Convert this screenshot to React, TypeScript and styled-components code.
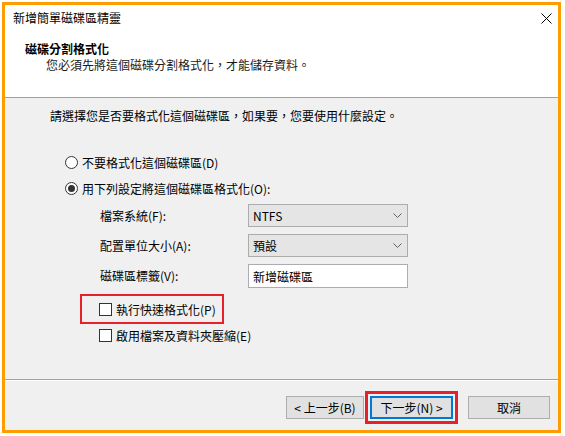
import React from 'react';
import styled, { createGlobalStyle } from 'styled-components';

const GlobalStyle = createGlobalStyle`
  html, body {
    margin: 0;
    padding: 0;
    background: #ffffff;
  }
  body {
    font-family: "Noto Sans CJK TC", "Noto Sans", sans-serif;
    font-size: 12px;
    color: #000;
  }
`;

const Frame = styled.div`
  box-sizing: border-box;
  margin: 2px;
  width: 559px;
  height: 431px;
  border: 3px solid #ff9c00;
  display: flex;
  flex-direction: column;
  background: #f0f0f0;
`;

const Header = styled.div`
  background: #ffffff;
  height: 93px;
  box-sizing: border-box;
  border-bottom: 1px solid #a0a0a0;
  display: flex;
  flex-direction: column;
`;

const TitleBar = styled.div`
  height: 26px;
  display: flex;
  align-items: center;
  justify-content: space-between;
  padding: 0 5px 0 8px;
`;

const TitleText = styled.span`
  line-height: 16px;
`;

const CloseButton = styled.div`
  width: 12px;
  height: 12px;
  display: flex;
  align-items: center;
  justify-content: center;
  margin-right: 1px;
`;

const HeadingBlock = styled.div`
  padding: 10px 0 0 20px;
`;

const Heading = styled.div`
  font-weight: bold;
  line-height: 16px;
`;

const SubHeading = styled.div`
  line-height: 16px;
  padding-left: 21px;
  color: #1a1a1a;
`;

const Body = styled.div`
  flex: 1;
  padding: 9px 0 0 45px;
  display: flex;
  flex-direction: column;
  align-items: flex-start;
`;

const Prompt = styled.div`
  line-height: 17px;
`;

const OptionRow = styled.div<{ $top: number; $left: number; $height?: number }>`
  display: flex;
  align-items: center;
  height: ${(p) => p.$height ?? 20}px;
  margin-top: ${(p) => p.$top}px;
  margin-left: ${(p) => p.$left}px;
`;

const Radio = styled.span<{ $checked?: boolean }>`
  box-sizing: border-box;
  width: 13px;
  height: 13px;
  border-radius: 50%;
  border: 1px solid #333;
  background: #fff;
  margin-right: 4px;
  display: flex;
  align-items: center;
  justify-content: center;
  &::after {
    content: '';
    display: ${(p) => (p.$checked ? 'block' : 'none')};
    width: 7px;
    height: 7px;
    border-radius: 50%;
    background: #333;
  }
`;

const Checkbox = styled.span`
  box-sizing: border-box;
  width: 13px;
  height: 13px;
  border: 1px solid #333;
  background: #fff;
  margin-right: 4px;
`;

const SettingsGrid = styled.div`
  display: grid;
  grid-template-columns: 148px 160px;
  grid-template-rows: 23px 23px 24px;
  row-gap: 7px;
  margin: 6px 0 0 50px;
  align-items: center;
`;

const FieldLabel = styled.div`
  line-height: 16px;
`;

const Select = styled.div`
  box-sizing: border-box;
  height: 23px;
  border: 1px solid #acacac;
  background: #e5e5e5;
  display: flex;
  align-items: center;
  justify-content: space-between;
  padding: 0 5px 0 4px;
`;

const TextInput = styled.div`
  box-sizing: border-box;
  height: 24px;
  border: 1px solid #abadb3;
  background: #fff;
  display: flex;
  align-items: center;
  padding: 0 4px;
`;

const Highlight = styled.div<{ $thin?: boolean }>`
  box-sizing: border-box;
  border: ${(p) => (p.$thin ? 2 : 3)}px solid #e8202c;
  padding: 2px;
`;

const QuickFormatBox = styled(Highlight)`
  width: 144px;
  margin: 6px 0 0 30px;
  padding: 0 0 0 17px;
`;

const Footer = styled.div`
  border-top: 1px solid #a0a0a0;
  box-shadow: inset 0 1px 0 #ffffff;
  height: 51px;
  box-sizing: border-box;
  display: flex;
  justify-content: flex-end;
  align-items: flex-start;
  padding: 11px 8px 0 0;
`;

const Button = styled.button<{ $primary?: boolean; $width: number }>`
  box-sizing: border-box;
  width: ${(p) => p.$width}px;
  height: 23px;
  margin: 0;
  padding: 0;
  font-family: inherit;
  font-size: 12px;
  color: #000;
  background: #e1e1e1;
  border: ${(p) => (p.$primary ? '2px solid #0078d7' : '1px solid #adadad')};
  display: block;
`;

const BackButton = styled(Button)`
  margin-top: 5px;
  margin-right: 1px;
`;

const CancelButton = styled(Button)`
  margin-top: 5px;
  margin-left: 10px;
`;

function Chevron() {
  return (
    <svg width="9" height="5" viewBox="0 0 9 5">
      <path d="M0.5 0.5 L4.5 4.5 L8.5 0.5" fill="none" stroke="#606060" strokeWidth="1" />
    </svg>
  );
}

function CloseIcon() {
  return (
    <svg width="11" height="11" viewBox="0 0 11 11">
      <path d="M0.5 0.5 L10.5 10.5 M10.5 0.5 L0.5 10.5" stroke="#000" strokeWidth="1" />
    </svg>
  );
}

export default function App() {
  return (
    <>
      <GlobalStyle />
      <Frame>
        <Header>
          <TitleBar>
            <TitleText>新增簡單磁碟區精靈</TitleText>
            <CloseButton>
              <CloseIcon />
            </CloseButton>
          </TitleBar>
          <HeadingBlock>
            <Heading>磁碟分割格式化</Heading>
            <SubHeading>您必須先將這個磁碟分割格式化，才能儲存資料。</SubHeading>
          </HeadingBlock>
        </Header>
        <Body>
          <Prompt>請選擇您是否要格式化這個磁碟區，如果要，您要使用什麼設定。</Prompt>
          <OptionRow $top={28} $left={15}>
            <Radio />
            不要格式化這個磁碟區(D)
          </OptionRow>
          <OptionRow $top={6} $left={15}>
            <Radio $checked />
            用下列設定將這個磁碟區格式化(O):
          </OptionRow>
          <SettingsGrid>
            <FieldLabel>檔案系統(F):</FieldLabel>
            <Select>
              NTFS
              <Chevron />
            </Select>
            <FieldLabel>配置單位大小(A):</FieldLabel>
            <Select>
              預設
              <Chevron />
            </Select>
            <FieldLabel>磁碟區標籤(V):</FieldLabel>
            <TextInput>新增磁碟區</TextInput>
          </SettingsGrid>
          <QuickFormatBox $thin>
            <OptionRow $top={0} $left={0} $height={26}>
              <Checkbox />
              執行快速格式化(P)
            </OptionRow>
          </QuickFormatBox>
          <OptionRow $top={1} $left={49}>
            <Checkbox />
            啟用檔案及資料夾壓縮(E)
          </OptionRow>
        </Body>
        <Footer>
          <BackButton $width={78}>&lt; 上一步(B)</BackButton>
          <Highlight>
            <Button $primary $width={83}>
              下一步(N) &gt;
            </Button>
          </Highlight>
          <CancelButton $width={82}>取消</CancelButton>
        </Footer>
      </Frame>
    </>
  );
}
